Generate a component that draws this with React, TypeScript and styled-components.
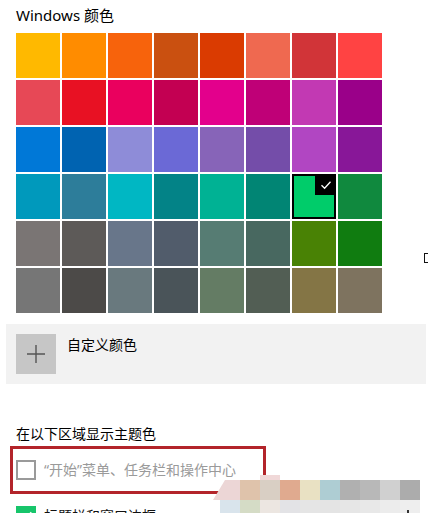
import React from 'react';
import styled, { createGlobalStyle } from 'styled-components';

const GlobalStyle = createGlobalStyle`
    html, body {
        margin: 0;
        padding: 0;
        background: #fff;
    }
    body {
        font-family: "Noto Sans", "Noto Sans CJK SC", sans-serif;
        color: #000;
    }
`;

const swatches = [
    ['#FFB900', '#FF8C00', '#F7630C', '#CA5010', '#DA3B01', '#EF6950', '#D13438', '#FF4343'],
    ['#E74856', '#E81123', '#EA005E', '#C30052', '#E3008C', '#BF0077', '#C239B3', '#9A0089'],
    ['#0078D7', '#0063B1', '#8E8CD8', '#6B69D6', '#8764B8', '#744DA9', '#B146C2', '#881798'],
    ['#0099BC', '#2D7D9A', '#00B7C3', '#038387', '#00B294', '#018574', '#00CC6A', '#10893E'],
    ['#7A7574', '#5D5A58', '#68768A', '#515C6B', '#567C73', '#486860', '#498205', '#107C10'],
    ['#767676', '#4C4A48', '#69797E', '#4A5459', '#647C64', '#525E54', '#847545', '#7E735F'],
];

const mosaicTop = ['#dfc3ab', '#d9cfc4', '#e0aa8f', '#e9e1c3', '#aecdd3', '#b0b0b0', '#b8b8b8', '#d0d0d0', '#acacac'];
const mosaicBottom = ['#d9e4ec', '#d5dcc6', '#ece6e1', '#e3e3e6', '#e5e5e5', '#e4e4e4', '#e6e6e6', '#e8e8e8', '#ececec', '#eeeeee'];

const Page = styled.div`
    position: relative;
    width: 428px;
    height: 513px;
    overflow: hidden;
    padding-left: 16px;
    box-sizing: border-box;
`;

const Title = styled.div`
    font-size: 15px;
    line-height: 20px;
    margin: 5px 0 8px;
    color: #000;
`;

const Grid = styled.div`
    display: grid;
    grid-template-columns: repeat(8, 44px);
    grid-auto-rows: 45px;
    gap: 2px;
`;

const Swatch = styled.div<{ $color: string; $selected?: boolean }>`
    position: relative;
    background: ${(p) => p.$color};
    box-sizing: border-box;
    border: ${(p) => (p.$selected ? '2px solid #000' : 'none')};
`;

const CheckCorner = styled.div`
    position: absolute;
    top: -2px;
    right: -2px;
    width: 21px;
    height: 21px;
    background: #000;
    display: flex;
    align-items: center;
    justify-content: center;
`;

const CustomCard = styled.div`
    margin: 11px 0 0 -10px;
    width: 420px;
    box-sizing: border-box;
    padding: 10px;
    background: #f2f2f2;
    display: flex;
    align-items: flex-start;
    gap: 11px;
`;

const PlusButton = styled.div`
    width: 40px;
    height: 40px;
    background: #c6c6c6;
    display: flex;
    align-items: center;
    justify-content: center;
`;

const CardLabel = styled.div`
    font-size: 14px;
    line-height: 20px;
    padding-top: 1px;
`;

const SectionHeading = styled.div`
    margin-top: 40px;
    font-size: 14px;
    line-height: 20px;
`;

const HighlightRow = styled.div`
    margin: 2px 0 0 -6px;
    width: 256px;
    height: 48px;
    box-sizing: border-box;
    border: 3px solid #b3242a;
    padding: 0 3px;
    display: flex;
    align-items: center;
    gap: 8px;
`;

const OptionRow = styled.div`
    margin-top: 12px;
    display: flex;
    align-items: center;
    gap: 8px;
`;

const Box = styled.div<{ $checked?: boolean }>`
    width: 20px;
    height: 20px;
    box-sizing: border-box;
    flex-shrink: 0;
    border: 2px solid ${(p) => (p.$checked ? '#17c56b' : '#9a9a9a')};
    background: ${(p) => (p.$checked ? '#17c56b' : 'transparent')};
    display: flex;
    align-items: center;
    justify-content: center;
`;

const OptionText = styled.span<{ $muted?: boolean }>`
    font-size: 14px;
    line-height: 20px;
    color: ${(p) => (p.$muted ? '#9a9a9a' : '#111')};
    white-space: nowrap;
`;

const Mosaic = styled.svg`
    position: absolute;
    left: 200px;
    top: 470px;
`;

const EdgeBracket = styled.div`
    position: absolute;
    left: 424px;
    top: 253px;
    width: 4px;
    height: 8px;
    border: 1.5px solid #111;
    border-right: none;
`;

const Tick = ({ size, color }: { size: number; color: string }) => (
    <svg width={size} height={size} viewBox='0 0 12 12'>
        <path d='M1.5 6.2 L4.6 9.2 L10.5 2.8' fill='none' stroke={color} strokeWidth='1.3' />
    </svg>
);

const App = () => {
    return (
        <>
            <GlobalStyle />
            <Page>
                <Title>Windows 颜色</Title>
                <Grid>
                    {swatches.flatMap((row, r) =>
                        row.map((c, i) => {
                            const selected = r === 3 && i === 6;
                            return (
                                <Swatch key={`${r}-${i}`} $color={c} $selected={selected}>
                                    {selected && (
                                        <CheckCorner>
                                            <Tick size={12} color='#fff' />
                                        </CheckCorner>
                                    )}
                                </Swatch>
                            );
                        })
                    )}
                </Grid>
                <CustomCard>
                    <PlusButton>
                        <svg width='18' height='18' viewBox='0 0 18 18'>
                            <path d='M9 0 V18 M0 9 H18' stroke='#555' strokeWidth='1.4' />
                        </svg>
                    </PlusButton>
                    <CardLabel>自定义颜色</CardLabel>
                </CustomCard>
                <SectionHeading>在以下区域显示主题色</SectionHeading>
                <HighlightRow>
                    <Box />
                    <OptionText $muted>“开始”菜单、任务栏和操作中心</OptionText>
                </HighlightRow>
                <OptionRow>
                    <Box $checked>
                        <Tick size={14} color='#fff' />
                    </Box>
                    <OptionText>标题栏和窗口边框</OptionText>
                </OptionRow>
                <Mosaic width='228' height='43'>
                    <rect x='60' y='5' width='20' height='6' fill='#f0d8d8' />
                    <polygon points='13,30 25,10 40,10 40,30' fill='#ecd6d6' />
                    {mosaicTop.map((c, i) => (
                        <rect key={c + i} x={40 + i * 20} y='10' width='20' height='20' fill={c} />
                    ))}
                    {mosaicBottom.map((c, i) => (
                        <rect key={c + i} x={20 + i * 20} y='30' width='20' height='13' fill={c} />
                    ))}
                    <rect x='207' y='40' width='2' height='3' fill='#333' />
                </Mosaic>
                <EdgeBracket />
            </Page>
        </>
    );
};

export default App;
